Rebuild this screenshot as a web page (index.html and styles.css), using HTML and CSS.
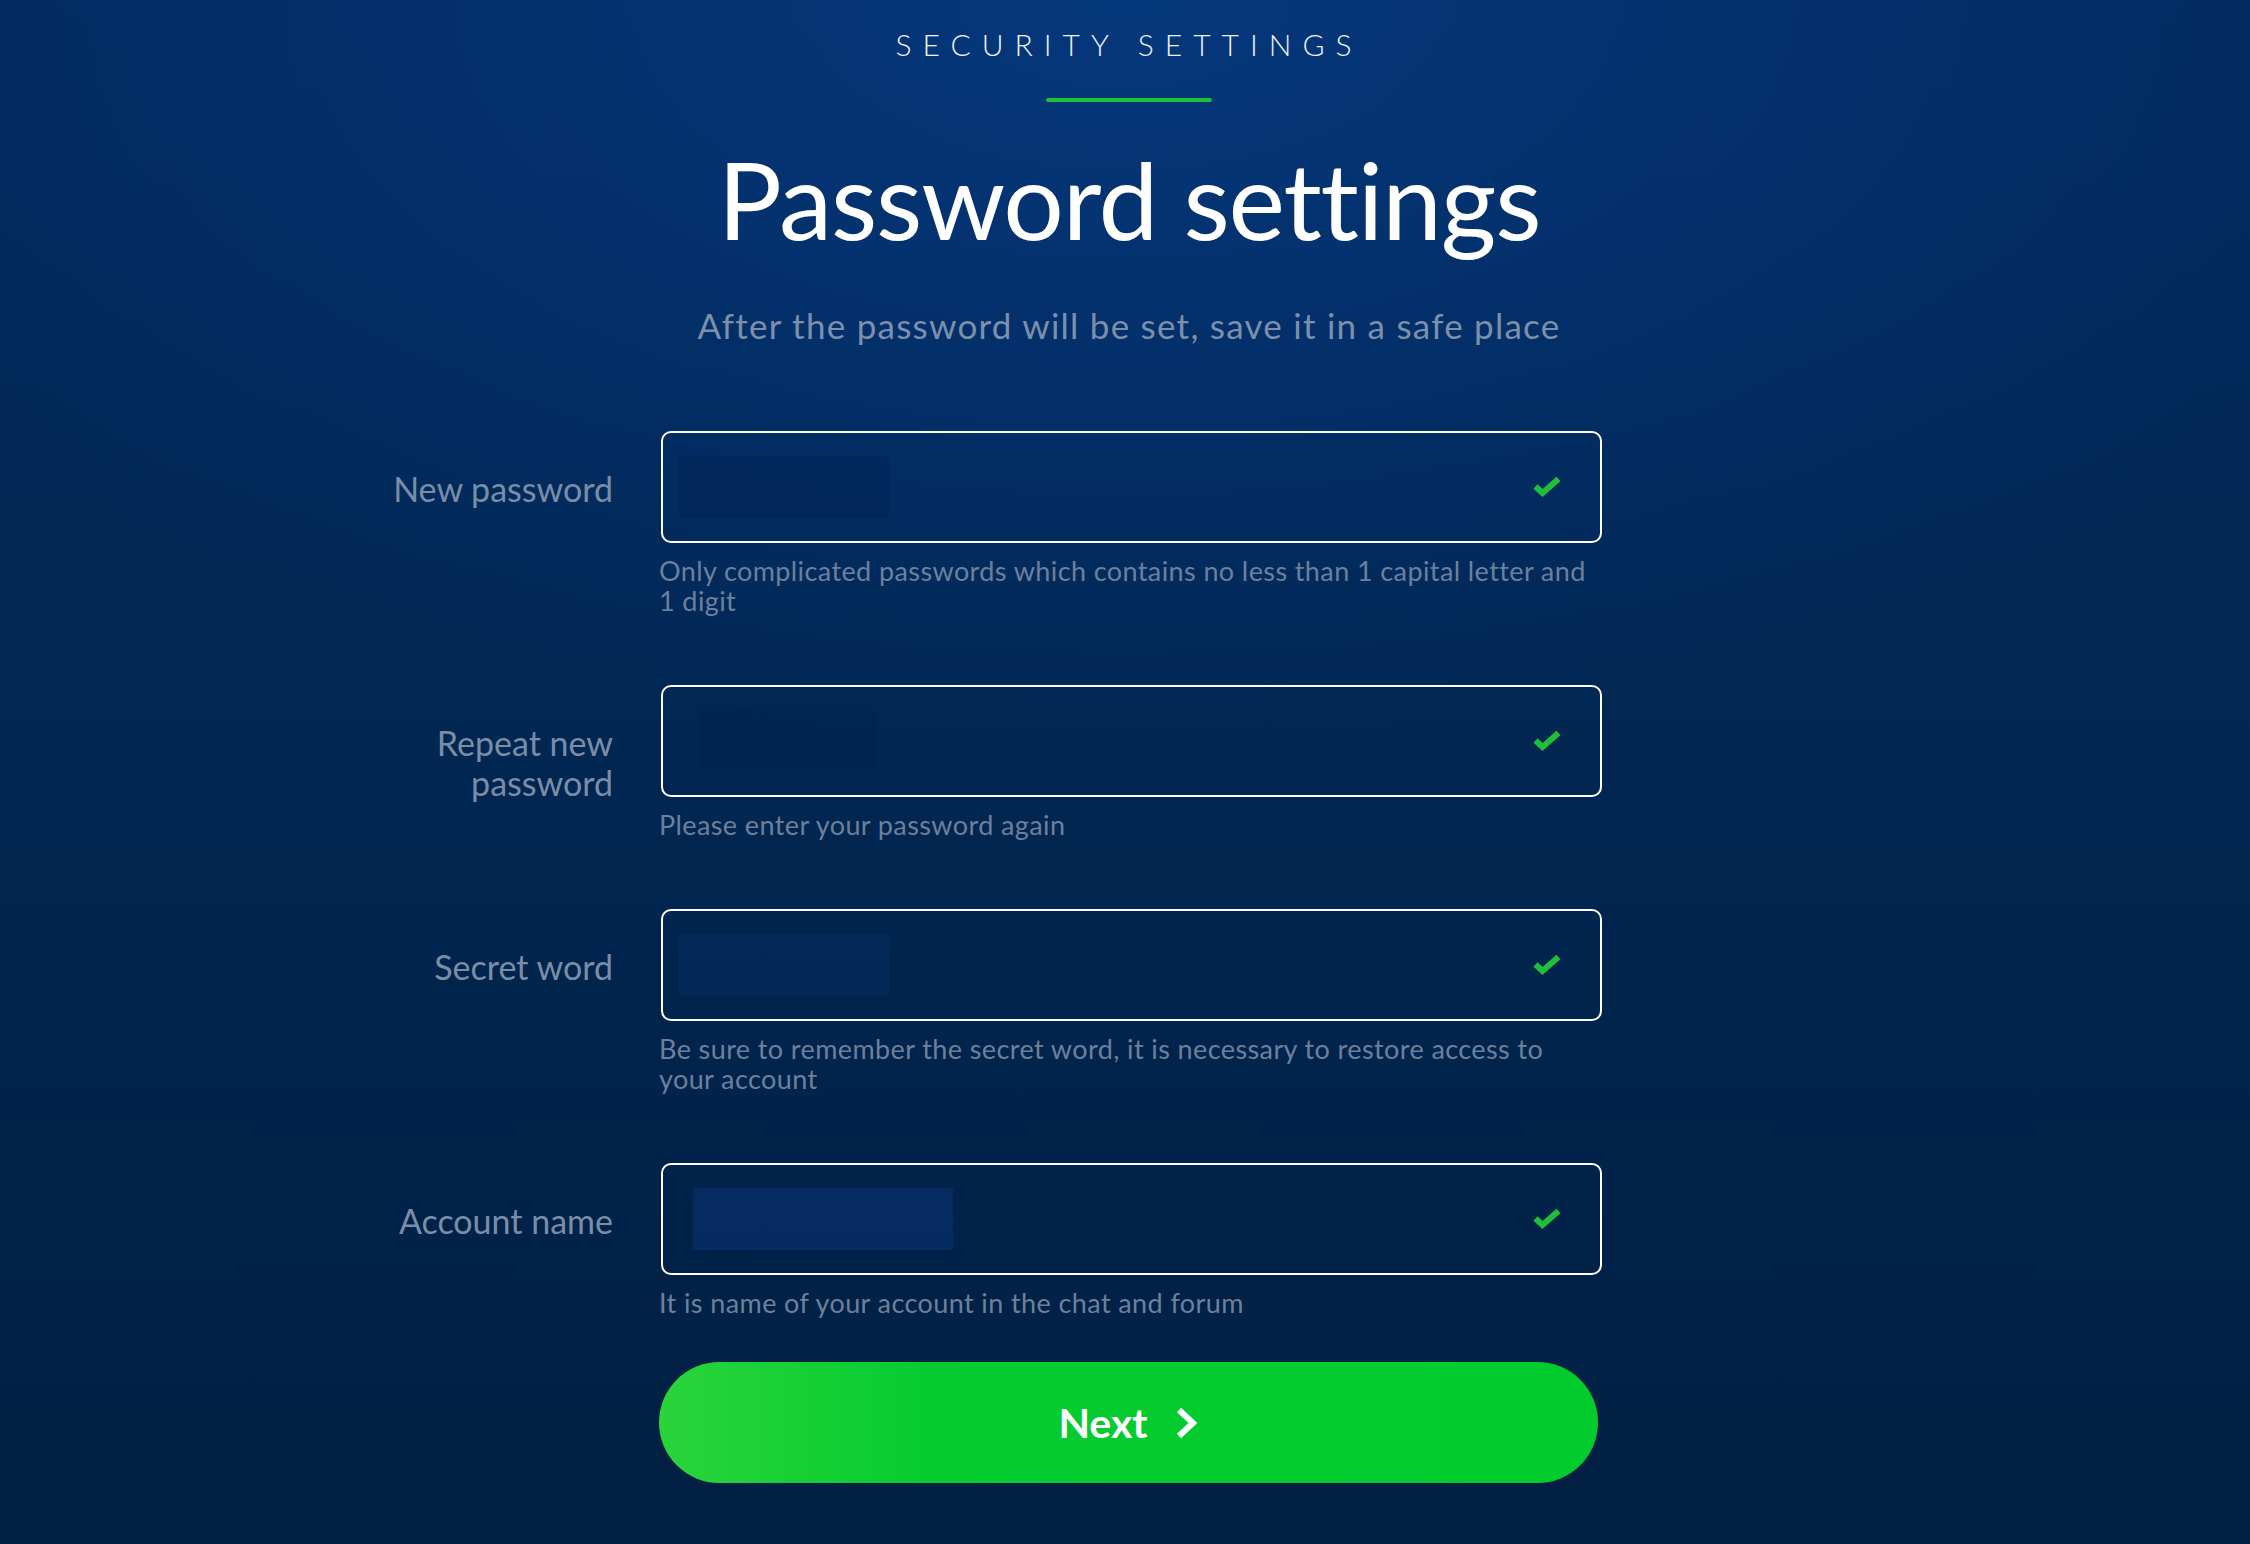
FILE: index.html
```html
<!DOCTYPE html>
<html lang="en">
<head>
<meta charset="utf-8">
<title>Password settings</title>
<link rel="stylesheet" href="styles.css">
</head>
<body>
<div class="page">
  <header class="head">
    <div class="eyebrow">SECURITY SETTINGS</div>
    <div class="eyebrow-line"></div>
    <h1 class="title">Password settings</h1>
    <p class="subtitle">After the password will be set, save it in a safe place</p>
  </header>

  <form class="form">
    <div class="row">
      <label class="label">New password</label>
      <div class="field">
        <div class="box"><span class="mask mask-dark"></span>
          <svg class="check" viewBox="0 0 28 22" width="28" height="22"><polyline points="2.5,10.5 9.5,17 25.5,3" /></svg>
        </div>
        <p class="hint">Only complicated passwords which contains no less than 1 capital letter and 1 digit</p>
      </div>
    </div>

    <div class="row">
      <label class="label">Repeat new password</label>
      <div class="field">
        <div class="box"><span class="mask mask-faint"></span>
          <svg class="check" viewBox="0 0 28 22" width="28" height="22"><polyline points="2.5,10.5 9.5,17 25.5,3" /></svg>
        </div>
        <p class="hint">Please enter your password again</p>
      </div>
    </div>

    <div class="row">
      <label class="label">Secret word</label>
      <div class="field">
        <div class="box"><span class="mask mask-light"></span>
          <svg class="check" viewBox="0 0 28 22" width="28" height="22"><polyline points="2.5,10.5 9.5,17 25.5,3" /></svg>
        </div>
        <p class="hint">Be sure to remember the secret word, it is necessary to restore access to your account</p>
      </div>
    </div>

    <div class="row">
      <label class="label">Account name</label>
      <div class="field">
        <div class="box"><span class="mask mask-wide"></span>
          <svg class="check" viewBox="0 0 28 22" width="28" height="22"><polyline points="2.5,10.5 9.5,17 25.5,3" /></svg>
        </div>
        <p class="hint">It is name of your account in the chat and forum</p>
      </div>
    </div>

    <div class="row row-action">
      <div class="field">
        <button type="button" class="next">Next
          <svg class="chev" viewBox="0 0 24 32" width="24" height="32"><polyline points="4,3 18,16 4,29" /></svg>
        </button>
      </div>
    </div>
  </form>
</div>
</body>
</html>
```

FILE: styles.css
```css
* { box-sizing: border-box; }

html, body {
  margin: 0;
  padding: 0;
  height: 100%;
}

body {
  font-family: "Lato", "Noto Sans", "Liberation Sans", sans-serif;
  background:
    radial-gradient(ellipse 62% 48% at 50% 0%, rgba(6, 58, 130, 0.85) 0%, rgba(6, 58, 130, 0) 100%),
    linear-gradient(180deg, #01295b 0%, #012753 45%, #011f42 100%);
  min-height: 1544px;
  color: #fff;
}

.page {
  padding: 0 0 60px 8px;
}

.head {
  display: flex;
  flex-direction: column;
  align-items: center;
  padding-top: 26px;
}

.eyebrow {
  font-size: 30px;
  line-height: 36px;
  font-weight: 300;
  letter-spacing: 11px;
  color: #eef3f8;
}

.eyebrow-line {
  width: 166px;
  height: 4px;
  border-radius: 2px;
  background: #1fbf3a;
  margin-top: 36px;
}

.title {
  margin: 43px 0 0;
  font-size: 107px;
  line-height: 107px;
  font-weight: 400;
  letter-spacing: -1.2px;
  color: #ffffff;
}

.subtitle {
  margin: 53px 0 0;
  font-size: 35px;
  line-height: 40px;
  letter-spacing: 1.25px;
  color: #7c8fab;
}

.form {
  margin-top: 86px;
  display: flex;
  flex-direction: column;
  gap: 69px;
}

.row {
  display: grid;
  grid-template-columns: 1fr 942px 1fr;
  align-items: start;
}

.label {
  grid-column: 1;
  justify-self: end;
  max-width: 290px;
  padding: 38px 45px 0 0;
  text-align: right;
  font-size: 34px;
  line-height: 40px;
  color: #7a8da7;
}

.row-action .field { grid-column: 2; }

.field {
  grid-column: 2;
  display: flex;
  flex-direction: column;
}

.box {
  height: 112px;
  margin-left: 3px;
  width: 941px;
  border: 2px solid #ffffff;
  border-radius: 10px;
  display: flex;
  align-items: center;
  justify-content: space-between;
  padding: 0 39px 0 16px;
}

.mask {
  display: block;
  height: 62px;
}
.mask-dark { width: 210px; background: rgba(0, 20, 60, 0.18); }
.mask-faint { width: 176px; margin-left: 20px; background: rgba(0, 20, 60, 0.08); }
.mask-light { width: 210px; background: rgba(20, 70, 150, 0.14); }
.mask-wide { width: 260px; margin-left: 14px; background: rgba(20, 70, 160, 0.28); }

.check {
  display: block;
  fill: none;
  stroke: #1fbf3a;
  stroke-width: 6;
  stroke-linejoin: miter;
}

.hint {
  margin: 13px 0 0;
  padding-left: 1px;
  max-width: 935px;
  font-size: 27px;
  line-height: 30px;
  letter-spacing: 0.4px;
  color: #6c809c;
}

.row-action {
  margin-top: -25px;
}

.next {
  width: 939px;
  height: 121px;
  margin-left: 1px;
  border: none;
  border-radius: 61px;
  background: linear-gradient(90deg, #2ad43b 0%, #06cc30 28%, #00cc2e 100%);
  color: #ffffff;
  font-family: "Lato", "Noto Sans", "Liberation Sans", sans-serif;
  font-size: 41px;
  font-weight: 700;
  display: flex;
  align-items: center;
  justify-content: center;
  gap: 27px;
  cursor: pointer;
  padding: 0;
}

.chev {
  display: block;
  fill: none;
  stroke: #ffffff;
  stroke-width: 6;
  stroke-linejoin: miter;
}
```
